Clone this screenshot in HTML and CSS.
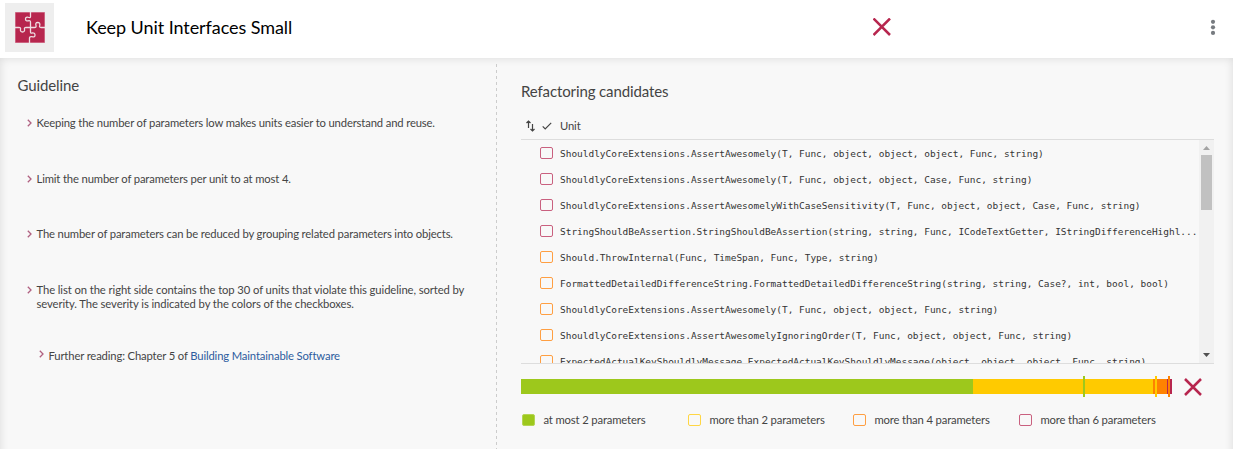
FILE: index.html
```html
<!DOCTYPE html>
<html lang="en">
<head>
<meta charset="utf-8">
<title>Keep Unit Interfaces Small</title>
<link rel="stylesheet" href="styles.css">
</head>
<body>
<header class="header">
  <div class="logo">
    <svg width="30" height="31" viewBox="0 0 30 31">
      <rect width="30" height="31" fill="#d98ba0"/>
      <rect x="0.6" y="0.6" width="28.8" height="29.8" fill="#b7264e"/>
      <g fill="none" stroke="#eedde2" stroke-width="1.3">
        <path d="M15.5 0V4.5Q15.5 6 14 5.5Q10.500 4.500 10.500 7Q10.500 9.600 14 8.700Q15.500 8.500 15.500 10V20Q15.500 21.500 17 21Q20 20.500 20 23Q20 25.600 17 24.700Q14.500 24.500 14.500 26V31"/>
        <path d="M0 15.500H4Q6 15.500 5.500 17Q5 20 7.500 20Q10 20 9.500 17Q9 15.500 11 15.500H19.500Q21.500 15.500 21 13.500Q20 10.500 22.700 10.500Q25.500 10.500 24.700 13.500Q24 15.500 26 15.500H30"/>
      </g>
    </svg>
  </div>
  <h1 class="title">Keep Unit Interfaces Small</h1>
  <svg class="status" width="18" height="18" viewBox="0 0 18 18"><path d="M.5 .5L17 17M17 .5L.5 17" stroke="#b7264e" stroke-width="2.500"/></svg>
  <svg class="more" width="6" height="16" viewBox="0 0 6 16" fill="#777b80"><circle cx="3" cy="2.800" r="2.100"/><circle cx="3" cy="8.300" r="2.100"/><circle cx="3" cy="13.900" r="2.100"/></svg>
</header>
<main class="content">
  <section class="guideline">
    <h2 class="heading">Guideline</h2>
    <ul class="points">
      <li class="point"><svg class="chevron" viewBox="0 0 5 8"><path d="M.8 .8L4 4L.8 7.200"/></svg><span>Keeping the number of parameters low makes units easier to understand and reuse.</span></li>
      <li class="point"><svg class="chevron" viewBox="0 0 5 8"><path d="M.8 .8L4 4L.8 7.200"/></svg><span>Limit the number of parameters per unit to at most 4.</span></li>
      <li class="point"><svg class="chevron" viewBox="0 0 5 8"><path d="M.8 .8L4 4L.8 7.200"/></svg><span>The number of parameters can be reduced by grouping related parameters into objects.</span></li>
      <li class="point wide"><svg class="chevron" viewBox="0 0 5 8"><path d="M.8 .8L4 4L.8 7.200"/></svg><span>The list on the right side contains the top 30 of units that violate this guideline, sorted by<br>severity. The severity is indicated by the colors of the checkboxes.</span></li>
      <li class="point reading"><svg class="chevron" viewBox="0 0 5 8"><path d="M.8 .8L4 4L.8 7.200"/></svg><span>Further reading: Chapter 5 of <a class="link">Building Maintainable Software</a></span></li>
    </ul>
  </section>
  <div class="divider"></div>
  <section class="candidates">
    <h2 class="heading">Refactoring candidates</h2>
    <div class="columns">
      <svg width="9" height="12" viewBox="0 0 9 12" fill="none" stroke="#444" stroke-width="1.200"><path d="M2.500 8V1M.5 3L2.500 1L4.500 3M6.500 4V11M4.500 9L6.500 11L8.500 9"/></svg>
      <svg class="tick" width="10" height="8" viewBox="0 0 10 8" fill="none" stroke="#444" stroke-width="1.200"><path d="M.7 4.300L3.200 6.800L9.200 .8"/></svg>
      <span>Unit</span>
    </div>
    <div class="list">
      <ul class="rows">
        <li class="row"><i class="box red"></i><span>ShouldlyCoreExtensions.AssertAwesomely(T, Func, object, object, object, Func, string)</span></li>
        <li class="row"><i class="box red"></i><span>ShouldlyCoreExtensions.AssertAwesomely(T, Func, object, object, Case, Func, string)</span></li>
        <li class="row"><i class="box red"></i><span>ShouldlyCoreExtensions.AssertAwesomelyWithCaseSensitivity(T, Func, object, object, Case, Func, string)</span></li>
        <li class="row"><i class="box red"></i><span>StringShouldBeAssertion.StringShouldBeAssertion(string, string, Func, ICodeTextGetter, IStringDifferenceHighl...</span></li>
        <li class="row"><i class="box orange"></i><span>Should.ThrowInternal(Func, TimeSpan, Func, Type, string)</span></li>
        <li class="row"><i class="box orange"></i><span>FormattedDetailedDifferenceString.FormattedDetailedDifferenceString(string, string, Case?, int, bool, bool)</span></li>
        <li class="row"><i class="box orange"></i><span>ShouldlyCoreExtensions.AssertAwesomely(T, Func, object, object, Func, string)</span></li>
        <li class="row"><i class="box orange"></i><span>ShouldlyCoreExtensions.AssertAwesomelyIgnoringOrder(T, Func, object, object, Func, string)</span></li>
        <li class="row"><i class="box orange"></i><span>ExpectedActualKeyShouldlyMessage.ExpectedActualKeyShouldlyMessage(object, object, object, Func, string)</span></li>
      </ul>
      <div class="scrollbar">
        <svg width="7" height="4" viewBox="0 0 7 4" fill="#a3a3a3"><path d="M0 4L3.500 0L7 4Z"/></svg>
        <div class="thumb"></div>
        <svg width="7" height="4" viewBox="0 0 7 4" fill="#505050"><path d="M0 0H7L3.500 4Z"/></svg>
      </div>
    </div>
    <div class="summary">
      <svg width="651" height="21" viewBox="0 0 651 21" shape-rendering="crispEdges">
        <rect y="3" width="452" height="15" fill="#9dc81c"/>
        <rect x="452" y="3" width="180" height="15" fill="#ffca00"/>
        <rect x="632" y="3" width="14" height="15" fill="#ff8200"/>
        <rect x="646" y="3" width="5" height="15" fill="#b7264e"/>
        <rect x="562" width="2" height="21" fill="#9dc81c"/>
        <rect x="634" width="2" height="21" fill="#ffca00"/>
        <rect x="647" width="2" height="21" fill="#ff8200"/>
      </svg>
      <svg width="18" height="18" viewBox="0 0 18 18"><path d="M1 1L17 17M17 1L1 17" stroke="#b7264e" stroke-width="2.500"/></svg>
    </div>
    <ul class="legend">
      <li class="key"><i class="box green"></i><span>at most 2 parameters</span></li>
      <li class="key"><i class="box yellow"></i><span>more than 2 parameters</span></li>
      <li class="key"><i class="box orange"></i><span>more than 4 parameters</span></li>
      <li class="key"><i class="box red"></i><span>more than 6 parameters</span></li>
    </ul>
  </section>
</main>
</body>
</html>
```
FILE: styles.css
```css
* { box-sizing: border-box; }
body { margin: 0; height: 449px; overflow: hidden; display: flex; flex-direction: column; background: #f8f8f8; color: #444; font: 11.250px/14px Lato, sans-serif; letter-spacing: -.145px; }
ul { list-style: none; margin: 0; padding: 0; }
svg { display: block; flex: none; }
.header { height: 58px; flex: none; background: #fff; display: flex; align-items: flex-start; padding: 3px 17px 0 5px; }
.logo { width: 49px; height: 49px; background: #eee; display: flex; align-items: center; justify-content: center; }
.title { width: 787px; margin: 12px 0 0; padding-left: 32px; color: #000; font-size: 18px; line-height: 24px; font-weight: 400; letter-spacing: -.07px; }
.status { margin: 15px 0 0 32px; }
.more { margin: 16px 0 0 auto; }
.content { height: 411px; flex: none; display: flex; box-shadow: inset 0 0 10px rgba(0, 0, 0, .12); }
.heading { margin: 0; font-size: 15px; line-height: 20px; font-weight: 400; letter-spacing: -.12px; }
.guideline { width: 496px; padding: 17px 0 0 17.500px; white-space: nowrap; }
.points { padding: 21px 0 0 9px; }
.point { display: flex; gap: 5px; margin-bottom: 41.700px; }
.wide { letter-spacing: -.09px; }
.chevron { width: 5px; height: 8px; margin-top: 3px; fill: none; stroke: #b06080; stroke-width: 1.300; }
.reading { margin: -4px 0 0 12px; }
.reading .chevron { margin-top: 1px; }
.link { color: #2d5c9e; }
.divider { width: 1px; margin-top: 6px; background: repeating-linear-gradient(#ccc 0 3px, transparent 3px 6px); }
.candidates { flex: 1; padding: 23px 19px 0 24px; }
.columns { height: 38px; display: flex; align-items: center; padding: 12px 0 0 5px; }
.tick { margin: 0 8px 0 7px; }
.list { height: 225px; border: solid #ddd; border-width: 1px 0; display: flex; overflow: hidden; }
.rows { flex: 1; min-width: 0; }
.row { height: 26px; display: flex; align-items: center; gap: 7px; padding-left: 19px; color: #333; font: 9.465px/14px "DejaVu Sans Mono", monospace; letter-spacing: 0; white-space: nowrap; }
.row span { padding-top: 2px; }
.box { width: 13px; height: 12px; border: 1px solid; border-radius: 2px; flex: none; }
.red { border-color: #c9607f; }
.orange { border-color: #ff9f42; }
.yellow { border-color: #ffd644; }
.green { background: #9dc81c; border-color: #b5d554; }
.scrollbar { width: 15px; background: #f1f1f1; display: flex; flex-direction: column; align-items: center; padding: 6px 0; }
.thumb { width: 11px; height: 55px; margin: 5px 0 auto; background: #c1c1c1; }
.summary { display: flex; align-items: center; gap: 12px; padding-top: 12px; }
.legend { display: grid; grid-template-columns: 166px 165px 166px auto; padding: 16px 0 0 1px; white-space: nowrap; }
.key { display: flex; align-items: center; gap: 8.500px; }
```
